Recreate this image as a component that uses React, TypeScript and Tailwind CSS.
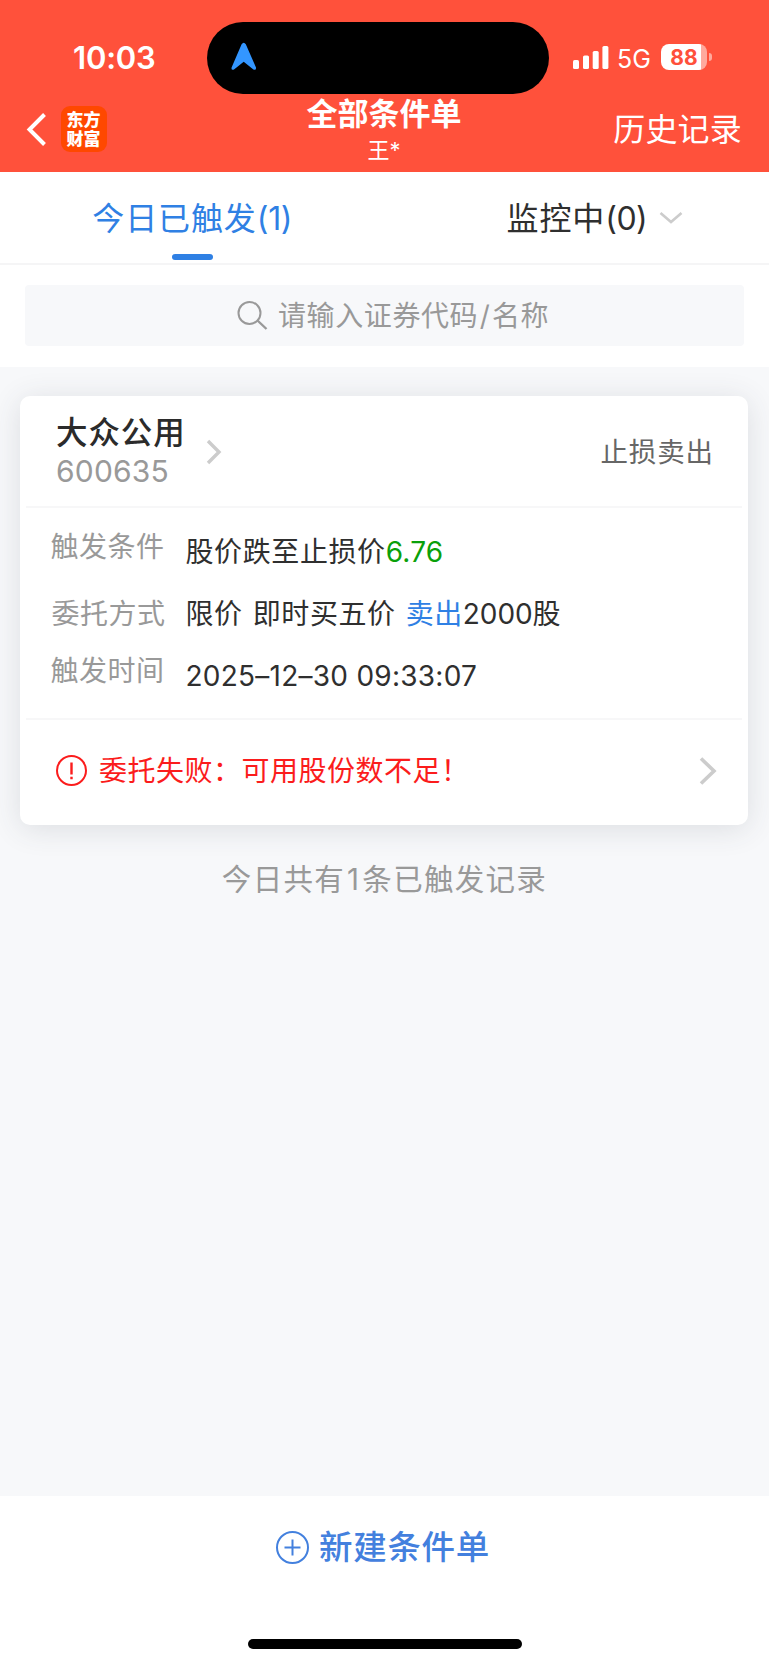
import React from "react";
import clsx from "clsx";

const ROWS = [
  {
    label: "触发条件",
    className: "h-[62px]",
    labelClass: "pl-[50.500px] pt-[16px]",
    valueClass: "pt-[21px] tracking-[0.600px]",
    value: (
      <>
        股价跌至止损价<span className="text-[#0aa00a] tracking-[0.2px]">6.76</span>
      </>
    ),
  },
  {
    label: "委托方式",
    className: "h-[62px]",
    labelClass: "pl-[51.500px] pt-[21px]",
    valueClass: "pt-[21px] tracking-[0.600px] [word-spacing:1.500px]",
    value: (
      <>
        限价 即时买五价 <span className="text-[#2f80e4]">卖出</span>
        <span className="tracking-[-0.1px]">2000</span>股
      </>
    ),
  },
  {
    label: "触发时间",
    className: "h-[62px]",
    labelClass: "pl-[50.500px] pt-[16px]",
    valueClass: "pt-[21px] tracking-[0.250px]",
    value: "2025–12–30 09:33:07",
  },
];

function Chevron({ className, d, viewBox, width = 3.4 }: { className: string; d: string; viewBox: string; width?: number }) {
  return (
    <svg className={className} viewBox={viewBox} fill="none" stroke="currentColor" strokeWidth={width}>
      <path d={d} />
    </svg>
  );
}

function StatusBar() {
  return (
    <div className="flex h-[94px] items-start text-white">
      <div className="w-[207px] shrink-0 pl-[73px] pt-[38px] text-[31px] font-semibold leading-[40px] tracking-[-0.2px]">10:03</div>
      <div className="mt-[22px] h-[72px] w-[342px] shrink-0 rounded-full bg-black pl-[24px] pt-[20px]">
        <svg className="h-[29px] w-[26px]" viewBox="0 0 26 29" fill="#3396ff">
          <path d="M10.6 2.3Q12.7-.8 14.8 2.3L25 25.6Q25.4 28.6 22.4 27.6L12.7 19.8 3 27.6Q0 28.6.6 25.6Z" />
        </svg>
      </div>
      <svg className="ml-[24px] mt-[46px] h-[23px] w-[36px] shrink-0" viewBox="0 0 36 23" fill="currentColor">
        <rect x="0" y="14" width="6" height="9" rx="1.6" />
        <rect x="10" y="9.5" width="6" height="13.5" rx="1.6" />
        <rect x="19.7" y="5" width="6" height="18" rx="1.6" />
        <rect x="29.4" y="0" width="6" height="23" rx="1.6" />
      </svg>
      <div className="ml-[8px] mt-[43px] w-[44px] shrink-0 text-[25px] leading-[32px]">5G</div>
      <div className="mt-[44px] flex items-center">
        <div className="h-[26px] w-[46px] rounded-[8px] bg-[linear-gradient(to_right,#fff_40px,#ffa99d_40px)] text-center text-[21px] font-bold leading-[27px] text-[#ff503b]">
          88
        </div>
        <div className="ml-[2px] h-[8px] w-[3px] rounded-r-full bg-[#ffa99d]" />
      </div>
    </div>
  );
}

function NavBar() {
  return (
    <div className="flex h-[78px] text-white">
      <div className="flex w-[256px] pl-[25.500px]">
        <Chevron className="mt-[18px] h-[35px] w-[21px]" viewBox="0 0 21 35" d="M18.500 2.500 3.500 17.500 18.500 32.500" width={4} />
        <div className="ml-[14px] mt-[12px] h-[46px] w-[46px] rounded-[9px] bg-[#ff4800] pt-[5px] text-center text-[17px] font-black leading-[18.500px]">
          <div>东方</div>
          <div>财富</div>
        </div>
      </div>
      <div className="w-[256px] text-center">
        <div className="h-[38px] text-[31px] font-semibold leading-[40px]">全部条件单</div>
        <div className="text-[22px] leading-[37px]">王*</div>
      </div>
      <div className="flex-1 pr-[27px] pt-[14px] text-right text-[32px] leading-[44px] tracking-[0.2px]">历史记录</div>
    </div>
  );
}

function OrderCard() {
  return (
    <div className="ml-[20px] mr-[21px] mt-[29px] h-[429px] rounded-[10px] bg-white shadow-[0_4px_30px_rgba(60,65,75,0.14)]">
      <div className="mx-[6px] flex h-[112px] border-b-2 border-[#f7f7f8]">
        <div className="pl-[30px] pt-[18px]">
          <div className="text-[31.500px] font-medium leading-[38px] tracking-[0.9px] text-[#2b2b2b]">大众公用</div>
          <div className="text-[30px] leading-[38px] tracking-[0.2px] text-[#999]">600635</div>
        </div>
        <Chevron className="ml-[20px] mt-[43px] h-[26px] w-[16px] text-[#ccc]" viewBox="0 0 16 26" d="M2 2 13 13 2 24" />
        <div className="flex-1 pr-[28px] pt-[36px] text-right text-[27.500px] leading-[40px] tracking-[0.900px] text-[#666]">止损卖出</div>
      </div>
      <div className="h-[210px] pt-[3px]">
        {ROWS.map((row) => (
          <div key={row.label} className={clsx("-ml-[20px] flex text-[28px] leading-[40px]", row.className)}>
            <div className={clsx("w-[185.500px] shrink-0 tracking-[0.500px] text-[#999]", row.labelClass)}>{row.label}</div>
            <div className={clsx("whitespace-nowrap text-[#2f2f2f]", row.valueClass)}>{row.value}</div>
          </div>
        ))}
      </div>
      <div className="mx-[6px] flex h-[107px] items-center border-t-2 border-[#f7f7f8] pb-[4px] pl-[29px] pr-[25px] text-[#fb1c1c]">
        <svg className="h-[33px] w-[33px]" viewBox="0 0 33 33" fill="none" stroke="currentColor" strokeWidth="2">
          <circle cx="16.5" cy="16.5" r="14.5" />
          <path d="M16.5 8.500V20.500M16.500 22.700V25.300" strokeWidth="2.4" />
        </svg>
        <div className="ml-[11px] flex-1 pt-[1px] text-[28px] leading-[40px] tracking-[0.500px]">委托失败：可用股份数不足！</div>
        <Chevron className="h-[28px] w-[18px] text-[#ccc]" viewBox="0 0 18 28" d="M2 1.500 15 14 2 26.500" width={3.6} />
      </div>
    </div>
  );
}

export default function App() {
  return (
    <div className="flex h-[1665px] w-[769px] flex-col overflow-hidden bg-[#f7f8fa] font-['Inter','Noto_Sans_CJK_SC',sans-serif]">
      <header className="h-[172px] shrink-0 bg-[#ff513b]">
        <StatusBar />
        <NavBar />
      </header>

      <nav className="flex h-[93px] shrink-0 border-b-2 border-[#f5f5f6] bg-white text-[32px] leading-[44px]">
        <div className="flex w-1/2 flex-col items-center pt-[25px] text-[#2f80e4]">
          <div className="tracking-[0.900px]">
            今日已触发<span className="tracking-[-0.3px]">(1)</span>
          </div>
          <div className="mt-[13px] h-[6px] w-[41px] rounded-full bg-[#2f80e4]" />
        </div>
        <div className="flex w-1/2 pl-[122px] pt-[25px] text-[#2f2f2f]">
          <div className="tracking-[0.900px]">
            监控中<span className="tracking-[-0.5px]">(0)</span>
          </div>
          <Chevron className="ml-[12px] mt-[14px] h-[14px] w-[24px] text-[#ccc]" viewBox="0 0 24 14" d="M1.500 2 12 11 22.500 2" width={2.6} />
        </div>
      </nav>

      <div className="h-[102px] shrink-0 bg-white px-[25px] pt-[20px]">
        <div className="flex h-[61px] items-center rounded-[4px] bg-[#f7f8fa] pl-[212px] text-[28px] leading-[40px] tracking-[0.600px] text-[#999]">
          <svg className="h-[31px] w-[31px]" viewBox="0 0 31 31" fill="none" stroke="currentColor" strokeWidth="2">
            <circle cx="12.5" cy="13" r="11" />
            <path d="M20.500 20.500 29.500 29" strokeWidth="2.4" />
          </svg>
          <div className="ml-[10px] pt-[1px]">
            请输入证券代码<span className="mx-[1.500px]">/</span>名称
          </div>
        </div>
      </div>

      <main className="flex-1">
        <OrderCard />
        <div className="mt-[33px] text-center text-[29.500px] leading-[42px] tracking-[1.300px] text-[#999]">
          今日共有<span className="mx-[2px]">1</span>条已触发记录
        </div>
      </main>

      <footer className="flex h-[169px] shrink-0 flex-col items-center bg-white">
        <div className="flex h-[102px] w-full items-center pl-[275px] text-[#4380de]">
          <svg className="h-[35px] w-[35px]" viewBox="0 0 35 35" fill="none" stroke="currentColor" strokeWidth="2">
            <circle cx="17.5" cy="17.5" r="15.5" />
            <path d="M9.500 17.500H25.500M17.500 9.500V25.500" />
          </svg>
          <div className="ml-[9px] text-[33.500px] font-medium leading-[46px] tracking-[0.700px]">新建条件单</div>
        </div>
        <div className="mt-[41px] h-[10px] w-[274px] rounded-full bg-black" />
      </footer>
    </div>
  );
}
